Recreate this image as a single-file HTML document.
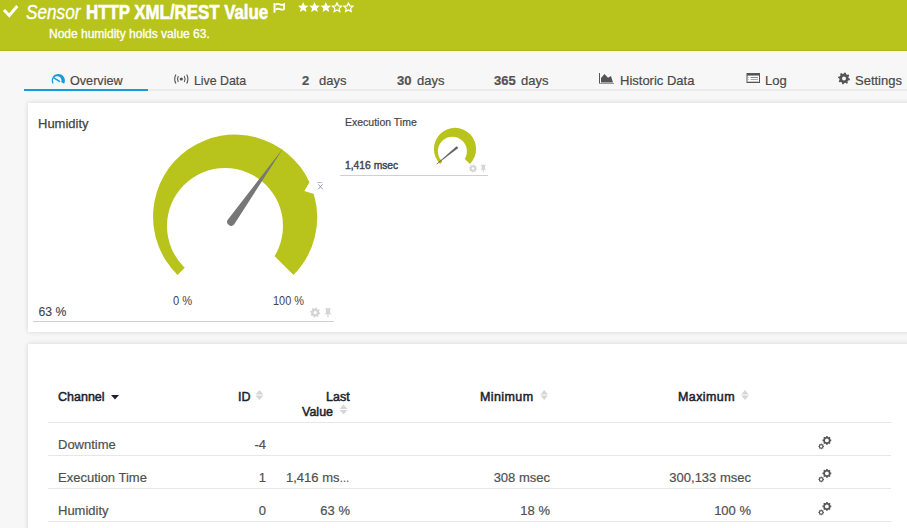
<!DOCTYPE html>
<html><head><meta charset="utf-8">
<style>
*{margin:0;padding:0;box-sizing:border-box}
html,body{width:907px;height:528px;overflow:hidden;background:#f7f7f7;font-family:"Liberation Sans",sans-serif;position:relative}
.a{position:absolute;white-space:nowrap;line-height:1}
#hdr{position:absolute;left:0;top:0;width:907px;height:51px;background:#b8c41c;border-bottom:1px solid #aeb917}
.w{color:#fff}
.tab{color:#4a4a4a;font-size:13px;-webkit-text-stroke:0.2px #4a4a4a}
.tab b{color:#555}
.panel{position:absolute;background:#fff;box-shadow:0 0 5px rgba(0,0,0,.14)}
.th{color:#1d1f2e;font-size:12.5px;-webkit-text-stroke:0.5px #1d1f2e}
.td{color:#505050;font-size:13px;-webkit-text-stroke:0.2px #505050}
.rl{position:absolute;left:48px;width:843px;height:1px;background:#e6e6e6}
svg.a{overflow:visible}
</style></head><body>

<div id="hdr"></div>
<!-- header svg overlay -->
<svg class="a" style="left:0;top:0" width="907" height="51">
<path d="M4 10 L9.3 15.5 L17.3 6" fill="none" stroke="#fff" stroke-width="3"/>
<path d="M274.5 3 L274.5 12.7" stroke="#fff" stroke-width="2"/>
<path d="M275.5 4.6 Q278 3.4 280 4.4 Q282.3 5.4 284 4.4 L284 9.2 Q282.3 10.2 280 9.2 Q278 8.2 275.5 9.4" fill="none" stroke="#fff" stroke-width="1.8"/>
<g fill="#fff">
<path d="M303.20,2.00 L304.73,5.40 L308.43,5.80 L305.67,8.30 L306.43,11.95 L303.20,10.10 L299.97,11.95 L300.73,8.30 L297.97,5.80 L301.67,5.40Z"/>
<path d="M314.50,2.00 L316.03,5.40 L319.73,5.80 L316.97,8.30 L317.73,11.95 L314.50,10.10 L311.27,11.95 L312.03,8.30 L309.27,5.80 L312.97,5.40Z"/>
<path d="M325.80,2.00 L327.33,5.40 L331.03,5.80 L328.27,8.30 L329.03,11.95 L325.80,10.10 L322.57,11.95 L323.33,8.30 L320.57,5.80 L324.27,5.40Z"/>
</g>
<g fill="none" stroke="#fff" stroke-width="1.2" stroke-linejoin="miter">
<path d="M337.00,2.90 L338.35,5.84 L341.57,6.22 L339.19,8.41 L339.82,11.58 L337.00,10.00 L334.18,11.58 L334.81,8.41 L332.43,6.22 L335.65,5.84Z"/>
<path d="M348.40,2.90 L349.75,5.84 L352.97,6.22 L350.59,8.41 L351.22,11.58 L348.40,10.00 L345.58,11.58 L346.21,8.41 L343.83,6.22 L347.05,5.84Z"/>
</g>
</svg>
<div id="t1" class="a w" style="left:26px;top:2.3px;font-size:20px;font-style:italic;transform:scaleX(0.86);transform-origin:0 0;-webkit-text-stroke:0.3px #fff">Sensor</div>
<div id="t2" class="a w" style="left:86px;top:2.3px;font-size:20px;font-weight:bold;transform:scaleX(0.842);transform-origin:0 0;-webkit-text-stroke:0.6px #fff">HTTP XML/REST Value</div>
<div id="t3" class="a w" style="left:49px;top:28px;font-size:12px;-webkit-text-stroke:0.3px #fff">Node humidity holds value 63.</div>

<!-- tabs -->
<div class="a" style="left:148px;top:89px;width:759px;height:2px;background:#ebebeb"></div>
<div class="a" style="left:24px;top:89px;width:124px;height:2px;background:#1a9ad6"></div>
<svg class="a" style="left:0;top:60px" width="907" height="30">
<!-- overview gauge icon -->
<g>
<path d="M58.3 20.5 L52.53 23.7 A6.6 6.6 0 1 1 64.07 23.7Z" fill="#1a9ad6"/>
<circle cx="57.2" cy="20.6" r="4.3" fill="#f7f7f7"/>
<path d="M54.2 18.2 L59.5 21.4" stroke="#1a9ad6" stroke-width="1.5" stroke-linecap="round"/>
</g>
<!-- live icon -->
<g transform="translate(181.3,19)" fill="none" stroke="#555" stroke-width="1.1">
<circle cx="0" cy="0" r="1.6" fill="#555" stroke="none"/>
<path d="M-3,-3 Q-4.6,0 -3,3 M3,-3 Q4.6,0 3,3"/>
<path d="M-5.4,-4.6 Q-7.8,0 -5.4,4.6 M5.4,-4.6 Q7.8,0 5.4,4.6"/>
</g>
<!-- historic icon -->
<g transform="translate(0,0)">
<path d="M599.5 13 L599.5 24" stroke="#555" stroke-width="1"/>
<path d="M599 23.5 L614 23.5" stroke="#999" stroke-width="1"/>
<path d="M601 22.5 L601 18 L604.5 14 L608 17.8 L611 16 L613 22.5Z" fill="#555"/>
</g>
<!-- log icon -->
<g>
<rect x="747" y="13.5" width="12.5" height="9" fill="#fff" stroke="#555" stroke-width="1"/>
<rect x="747" y="13" width="12.5" height="2.6" fill="#555"/>
<path d="M750.5 17.5 L758 17.5" stroke="#8a8a8a" stroke-width="1"/><path d="M750.5 19.5 L758 19.5" stroke="#aaa" stroke-width="1"/><path d="M748 21.5 L758.5 21.5" stroke="#c8c8c8" stroke-width="1"/>
<path d="M748.5 17.5 L749 17.5 M748.5 19.5 L749 19.5" stroke="#999" stroke-width="1"/>
</g>
<path d="M-0.45,-4.58 L0.59,-5.97 L1.74,-5.74 L2.17,-4.06 L2.92,-3.56 L4.64,-3.81 L5.29,-2.83 L4.40,-1.34 L4.58,-0.45 L5.97,0.59 L5.74,1.74 L4.06,2.17 L3.56,2.92 L3.81,4.64 L2.83,5.29 L1.34,4.40 L0.45,4.58 L-0.59,5.97 L-1.74,5.74 L-2.17,4.06 L-2.92,3.56 L-4.64,3.81 L-5.29,2.83 L-4.40,1.34 L-4.58,0.45 L-5.97,-0.59 L-5.74,-1.74 L-4.06,-2.17 L-3.56,-2.92 L-3.81,-4.64 L-2.83,-5.29 L-1.34,-4.40Z M2,0 A2,2 0 1 0 -2,0 A2,2 0 1 0 2,0Z" fill-rule="evenodd" transform="translate(844,18.4) scale(1)" fill="#555"/>
</svg>
<div id="tb1" class="a tab" style="left:70px;top:74px;transform:scaleX(0.97);transform-origin:0 0">Overview</div>
<div id="tb2" class="a tab" style="left:194px;top:74px;transform:scaleX(0.95);transform-origin:0 0">Live Data</div>
<div id="tb3" class="a tab" style="left:302px;top:74px"><b>2</b></div>
<div id="tb3b" class="a tab" style="left:319px;top:74px">days</div>
<div id="tb4" class="a tab" style="left:397px;top:74px"><b>30</b></div>
<div id="tb4b" class="a tab" style="left:417px;top:74px">days</div>
<div id="tb5" class="a tab" style="left:494px;top:74px"><b>365</b></div>
<div id="tb5b" class="a tab" style="left:521px;top:74px">days</div>
<div id="tb6" class="a tab" style="left:620px;top:74px">Historic Data</div>
<div id="tb7" class="a tab" style="left:765px;top:74px">Log</div>
<div id="tb8" class="a tab" style="left:855px;top:74px">Settings</div>

<!-- panel 1 -->
<div class="panel" style="left:28px;top:103px;width:900px;height:229px"></div>
<div id="p1t" class="a" style="left:38px;top:117px;font-size:13px;color:#444;-webkit-text-stroke:0.25px #444">Humidity</div>
<svg class="a" style="left:0;top:0" width="907" height="340">
<path d="M235.5 217 L177.5 275 A82 82 0 1 1 309.5 182.2 L304.4 191 L313.8 193.9 A82 82 0 0 1 293.5 275Z" fill="#b8c41c"/>
<circle cx="225" cy="226" r="58" fill="#fff"/>
<path d="M227.74 219.69 L283.5 147.7 L234.26 224.31 A4 4 0 0 1 227.74 219.69Z" fill="#777"/>
<path d="M33 321.5 L334 321.5" stroke="#d0d0d0" stroke-width="1"/>
<path d="M-0.45,-4.58 L0.59,-5.97 L1.74,-5.74 L2.17,-4.06 L2.92,-3.56 L4.64,-3.81 L5.29,-2.83 L4.40,-1.34 L4.58,-0.45 L5.97,0.59 L5.74,1.74 L4.06,2.17 L3.56,2.92 L3.81,4.64 L2.83,5.29 L1.34,4.40 L0.45,4.58 L-0.59,5.97 L-1.74,5.74 L-2.17,4.06 L-2.92,3.56 L-4.64,3.81 L-5.29,2.83 L-4.40,1.34 L-4.58,0.45 L-5.97,-0.59 L-5.74,-1.74 L-4.06,-2.17 L-3.56,-2.92 L-3.81,-4.64 L-2.83,-5.29 L-1.34,-4.40Z M2,0 A2,2 0 1 0 -2,0 A2,2 0 1 0 2,0Z" fill-rule="evenodd" transform="translate(315.2,312.6) scale(0.85)" fill="#d4d4d4"/>
<path d="M-3,-4.5 L3,-4.5 L3,-3.5 L2,-3.5 L2,0 L3.5,1.5 L0.6,1.5 L0.6,4.5 L-0.6,4.5 L-0.6,1.5 L-3.5,1.5 L-2,0 L-2,-3.5 L-3,-3.5Z" transform="translate(328,312.8)" fill="#d4d4d4"/>
<!-- mini gauge -->
<path d="M455 149 L440.1 163.9 A21.1 21.1 0 1 1 469.9 163.9Z" fill="#b8c41c"/>
<circle cx="452.4" cy="151.3" r="14.5" fill="#fff"/>
<path d="M456.1 146.9 L436.7 164.1 L457.5 148.3 A1 1 0 0 0 456.1 146.9Z" fill="#5c5c5c" stroke="#5c5c5c" stroke-width="0.5"/>
<path d="M340 175.5 L488 175.5" stroke="#d0d0d0" stroke-width="1"/>
<path d="M-0.45,-4.58 L0.59,-5.97 L1.74,-5.74 L2.17,-4.06 L2.92,-3.56 L4.64,-3.81 L5.29,-2.83 L4.40,-1.34 L4.58,-0.45 L5.97,0.59 L5.74,1.74 L4.06,2.17 L3.56,2.92 L3.81,4.64 L2.83,5.29 L1.34,4.40 L0.45,4.58 L-0.59,5.97 L-1.74,5.74 L-2.17,4.06 L-2.92,3.56 L-4.64,3.81 L-5.29,2.83 L-4.40,1.34 L-4.58,0.45 L-5.97,-0.59 L-5.74,-1.74 L-4.06,-2.17 L-3.56,-2.92 L-3.81,-4.64 L-2.83,-5.29 L-1.34,-4.40Z M2,0 A2,2 0 1 0 -2,0 A2,2 0 1 0 2,0Z" fill-rule="evenodd" transform="translate(473,168.5) scale(0.68)" fill="#d4d4d4"/>
<path d="M-3,-4.5 L3,-4.5 L3,-3.5 L2,-3.5 L2,0 L3.5,1.5 L0.6,1.5 L0.6,4.5 L-0.6,4.5 L-0.6,1.5 L-3.5,1.5 L-2,0 L-2,-3.5 L-3,-3.5Z" transform="translate(483.3,168.5) scale(0.85)" fill="#d4d4d4"/>
</svg>
<svg class="a" style="left:0;top:0" width="1" height="1"><path d="M317.2 182.6 L322.2 182.6" stroke="#a3aac0" stroke-width="0.8"/><path d="M318.3 184.3 L322.6 189.2 M322.6 184.3 L318.3 189.2" stroke="#8c96b4" stroke-width="0.9"/></svg>
<div id="lb1" class="a" style="left:38.5px;top:305.5px;font-size:12.2px;color:#3d4450;-webkit-text-stroke:0.12px #3d4450">63 %</div>
<div id="lb2" class="a" style="left:173px;top:295px;font-size:12px;color:#444;transform:scaleX(0.93);transform-origin:0 0">0 %</div>
<div id="lb3" class="a" style="left:272.5px;top:295px;font-size:12px;color:#444;transform:scaleX(0.91);transform-origin:0 0">100 %</div>
<div id="et1" class="a" style="left:345px;top:117px;font-size:10.5px;color:#444;-webkit-text-stroke:0.2px #444">Execution Time</div>
<div id="et2" class="a" style="left:345px;top:161px;font-size:10.3px;color:#3d4450;-webkit-text-stroke:0.4px #3d4450">1,416 msec</div>

<!-- panel 2 -->
<div class="panel" style="left:28px;top:344px;width:900px;height:200px"></div>
<div id="h1" class="a th" style="left:58px;top:391px">Channel</div>
<div id="h2" class="a th" style="left:238px;top:391px">ID</div>
<div id="h3" class="a th" style="left:326px;top:391px">Last</div>
<div id="h3b" class="a th" style="left:302px;top:405.5px">Value</div>
<div id="h4" class="a th" style="left:480px;top:391px;letter-spacing:0.4px">Minimum</div>
<div id="h5" class="a th" style="left:678px;top:391px;letter-spacing:0.4px">Maximum</div>
<svg class="a" style="left:0;top:380px" width="907" height="148">
<path d="M111 15 L119 15 L115 19.5Z" fill="#1d1f2e"/>
<g fill="#d6d6d6">
<path d="M255.5 14.5 L263.5 14.5 L259.5 10Z M255.5 15.5 L263.5 15.5 L259.5 20Z"/>
<path d="M339.5 29 L347.5 29 L343.5 24.5Z M339.5 30 L347.5 30 L343.5 34.5Z"/>
<path d="M540.5 14.5 L548 14.5 L544.2 10Z M540.5 15.5 L548 15.5 L544.2 20Z"/>
<path d="M741.3 14.5 L748.8 14.5 L745 10Z M741.3 15.5 L748.8 15.5 L745 20Z"/>
</g>
<g fill="#555">
<path d="M-1.16,-4.76 L-1.05,-5.91 L1.05,-5.91 L1.16,-4.76 L2.54,-4.19 L3.43,-4.92 L4.92,-3.43 L4.19,-2.54 L4.76,-1.16 L5.91,-1.05 L5.91,1.05 L4.76,1.16 L4.19,2.54 L4.92,3.43 L3.43,4.92 L2.54,4.19 L1.16,4.76 L1.05,5.91 L-1.05,5.91 L-1.16,4.76 L-2.54,4.19 L-3.43,4.92 L-4.92,3.43 L-4.19,2.54 L-4.76,1.16 L-5.91,1.05 L-5.91,-1.05 L-4.76,-1.16 L-4.19,-2.54 L-4.92,-3.43 L-3.43,-4.92 L-2.54,-4.19Z M2.6,0 A2.6,2.6 0 1 0 -2.6,0 A2.6,2.6 0 1 0 2.6,0Z" fill-rule="evenodd" transform="translate(826.9,60.4) scale(0.74)"/>
<path d="M-1.16,-4.76 L-1.05,-5.91 L1.05,-5.91 L1.16,-4.76 L2.54,-4.19 L3.43,-4.92 L4.92,-3.43 L4.19,-2.54 L4.76,-1.16 L5.91,-1.05 L5.91,1.05 L4.76,1.16 L4.19,2.54 L4.92,3.43 L3.43,4.92 L2.54,4.19 L1.16,4.76 L1.05,5.91 L-1.05,5.91 L-1.16,4.76 L-2.54,4.19 L-3.43,4.92 L-4.92,3.43 L-4.19,2.54 L-4.76,1.16 L-5.91,1.05 L-5.91,-1.05 L-4.76,-1.16 L-4.19,-2.54 L-4.92,-3.43 L-3.43,-4.92 L-2.54,-4.19Z M2.6,0 A2.6,2.6 0 1 0 -2.6,0 A2.6,2.6 0 1 0 2.6,0Z" fill-rule="evenodd" transform="translate(821.2,66.4) scale(0.47)"/>
<path d="M-1.16,-4.76 L-1.05,-5.91 L1.05,-5.91 L1.16,-4.76 L2.54,-4.19 L3.43,-4.92 L4.92,-3.43 L4.19,-2.54 L4.76,-1.16 L5.91,-1.05 L5.91,1.05 L4.76,1.16 L4.19,2.54 L4.92,3.43 L3.43,4.92 L2.54,4.19 L1.16,4.76 L1.05,5.91 L-1.05,5.91 L-1.16,4.76 L-2.54,4.19 L-3.43,4.92 L-4.92,3.43 L-4.19,2.54 L-4.76,1.16 L-5.91,1.05 L-5.91,-1.05 L-4.76,-1.16 L-4.19,-2.54 L-4.92,-3.43 L-3.43,-4.92 L-2.54,-4.19Z M2.6,0 A2.6,2.6 0 1 0 -2.6,0 A2.6,2.6 0 1 0 2.6,0Z" fill-rule="evenodd" transform="translate(826.9,93.4) scale(0.74)"/>
<path d="M-1.16,-4.76 L-1.05,-5.91 L1.05,-5.91 L1.16,-4.76 L2.54,-4.19 L3.43,-4.92 L4.92,-3.43 L4.19,-2.54 L4.76,-1.16 L5.91,-1.05 L5.91,1.05 L4.76,1.16 L4.19,2.54 L4.92,3.43 L3.43,4.92 L2.54,4.19 L1.16,4.76 L1.05,5.91 L-1.05,5.91 L-1.16,4.76 L-2.54,4.19 L-3.43,4.92 L-4.92,3.43 L-4.19,2.54 L-4.76,1.16 L-5.91,1.05 L-5.91,-1.05 L-4.76,-1.16 L-4.19,-2.54 L-4.92,-3.43 L-3.43,-4.92 L-2.54,-4.19Z M2.6,0 A2.6,2.6 0 1 0 -2.6,0 A2.6,2.6 0 1 0 2.6,0Z" fill-rule="evenodd" transform="translate(821.2,99.4) scale(0.47)"/>
<path d="M-1.16,-4.76 L-1.05,-5.91 L1.05,-5.91 L1.16,-4.76 L2.54,-4.19 L3.43,-4.92 L4.92,-3.43 L4.19,-2.54 L4.76,-1.16 L5.91,-1.05 L5.91,1.05 L4.76,1.16 L4.19,2.54 L4.92,3.43 L3.43,4.92 L2.54,4.19 L1.16,4.76 L1.05,5.91 L-1.05,5.91 L-1.16,4.76 L-2.54,4.19 L-3.43,4.92 L-4.92,3.43 L-4.19,2.54 L-4.76,1.16 L-5.91,1.05 L-5.91,-1.05 L-4.76,-1.16 L-4.19,-2.54 L-4.92,-3.43 L-3.43,-4.92 L-2.54,-4.19Z M2.6,0 A2.6,2.6 0 1 0 -2.6,0 A2.6,2.6 0 1 0 2.6,0Z" fill-rule="evenodd" transform="translate(826.9,126.4) scale(0.74)"/>
<path d="M-1.16,-4.76 L-1.05,-5.91 L1.05,-5.91 L1.16,-4.76 L2.54,-4.19 L3.43,-4.92 L4.92,-3.43 L4.19,-2.54 L4.76,-1.16 L5.91,-1.05 L5.91,1.05 L4.76,1.16 L4.19,2.54 L4.92,3.43 L3.43,4.92 L2.54,4.19 L1.16,4.76 L1.05,5.91 L-1.05,5.91 L-1.16,4.76 L-2.54,4.19 L-3.43,4.92 L-4.92,3.43 L-4.19,2.54 L-4.76,1.16 L-5.91,1.05 L-5.91,-1.05 L-4.76,-1.16 L-4.19,-2.54 L-4.92,-3.43 L-3.43,-4.92 L-2.54,-4.19Z M2.6,0 A2.6,2.6 0 1 0 -2.6,0 A2.6,2.6 0 1 0 2.6,0Z" fill-rule="evenodd" transform="translate(821.2,132.4) scale(0.47)"/>
</g>
</svg>
<div class="rl" style="top:422px"></div>
<div class="rl" style="top:455px"></div>
<div class="rl" style="top:488px"></div>
<div class="rl" style="top:521px"></div>
<div id="r1" class="a td" style="left:58px;top:438px">Downtime</div>
<div id="r2" class="a td" style="left:58px;top:471px">Execution Time</div>
<div id="r3" class="a td" style="left:58px;top:504px">Humidity</div>
<div class="a td" style="right:641px;top:438px">-4</div>
<div class="a td" style="right:641px;top:471px">1</div>
<div class="a td" style="right:641px;top:504px">0</div>
<div class="a td" style="left:286px;top:471px">1,416 ms<span style="font-size:10px;letter-spacing:-0.5px">…</span></div>
<div class="a td" style="right:557px;top:504px">63 %</div>
<div class="a td" style="right:357px;top:471px">308 msec</div>
<div class="a td" style="right:357px;top:504px">18 %</div>
<div class="a td" style="right:156px;top:471px">300,133 msec</div>
<div class="a td" style="right:156px;top:504px">100 %</div>
</body></html>
